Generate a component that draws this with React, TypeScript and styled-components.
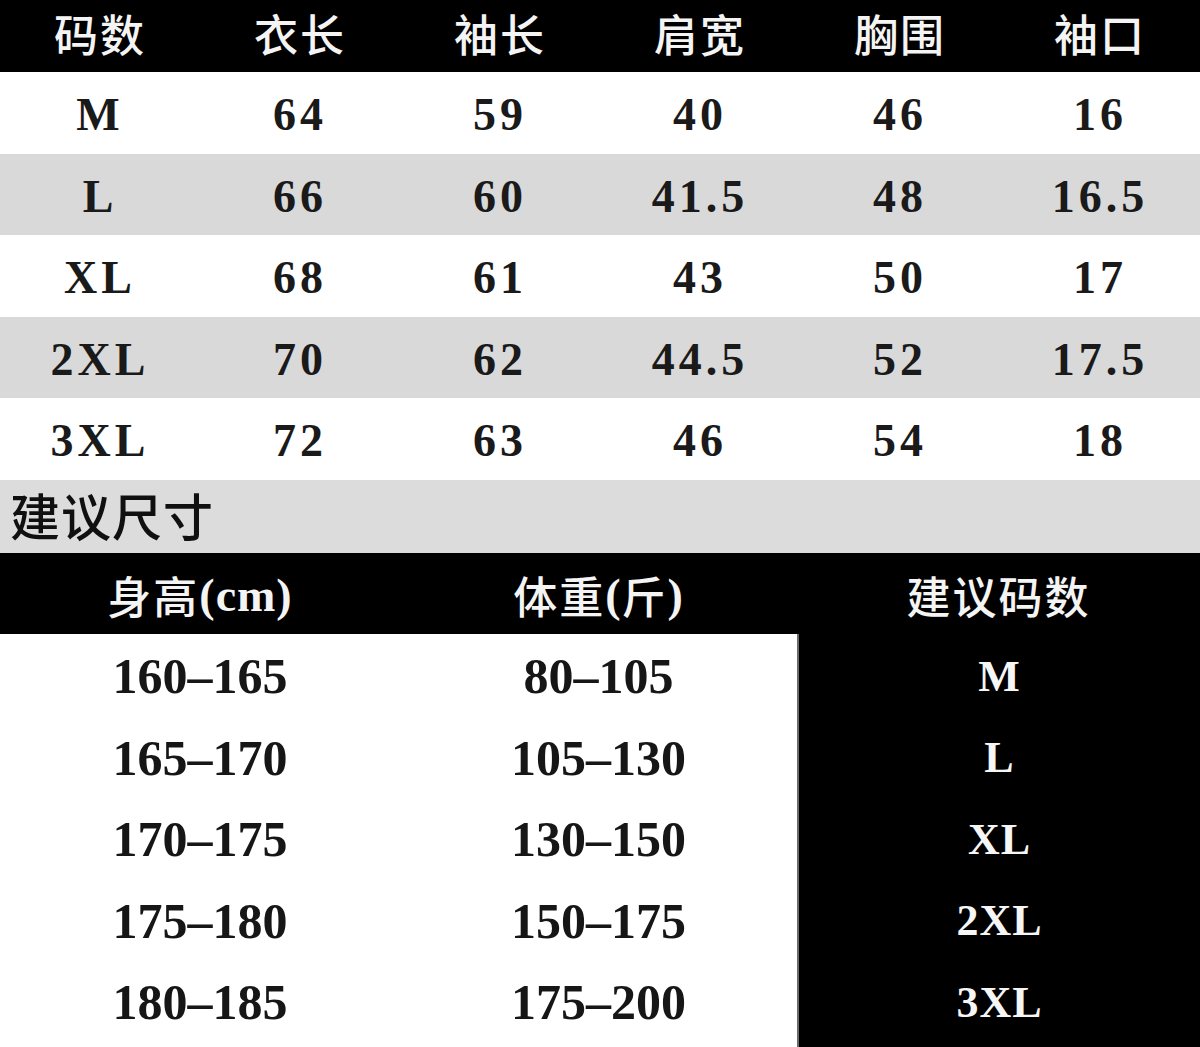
import React from 'react'
import styled, { createGlobalStyle } from 'styled-components'

const GlobalStyle = createGlobalStyle`
  html, body {
    margin: 0;
    padding: 0;
    background: #ffffff;
  }
  * {
    box-sizing: border-box;
  }
`

const Page = styled.div`
  width: 1200px;
  height: 1047px;
  overflow: hidden;
  background: #ffffff;
  display: flex;
  flex-direction: column;
  font-family: "Liberation Serif", "Noto Sans CJK SC", serif;
`

const SizeGrid = styled.div`
  display: grid;
  grid-template-columns: repeat(6, 200px);
`

const HeadCell = styled.div<{ height: number }>`
  height: ${props => props.height}px;
  background: #000000;
  color: #f4f4f4;
  display: flex;
  align-items: center;
  justify-content: center;
  font-family: "Noto Sans CJK SC", sans-serif;
  font-weight: 500;
  font-size: 44px;
  letter-spacing: 2px;
  padding-bottom: 6px;
`

const Cell = styled.div<{ shade: boolean }>`
  height: 81.5px;
  background: ${props => (props.shade ? '#d9d9d9' : '#ffffff')};
  color: #1a1a1a;
  display: flex;
  align-items: center;
  justify-content: center;
  font-family: "Liberation Serif", serif;
  font-weight: 700;
  font-size: 46px;
  letter-spacing: 4px;
  padding-top: 4px;
`

const SectionLabel = styled.div`
  height: 73px;
  background: #dcdcdc;
  color: #101010;
  display: flex;
  align-items: center;
  padding-left: 10px;
  font-family: "Noto Sans CJK SC", sans-serif;
  font-weight: 500;
  font-size: 50px;
  letter-spacing: 1px;
  padding-bottom: 4px;
`

const RecGrid = styled.div`
  display: grid;
  grid-template-columns: 400px 397px 403px;
  flex: 1;
  grid-template-rows: 81px;
  grid-auto-rows: 81.5px;
`

const RecHead = styled.div`
  background: #000000;
  color: #f4f4f4;
  display: flex;
  align-items: center;
  justify-content: center;
  font-family: "Noto Sans CJK SC", sans-serif;
  font-weight: 500;
  font-size: 44px;
  letter-spacing: 2px;
  padding-top: 4px;
`

const Paren = styled.span`
  font-family: "Liberation Serif", serif;
  font-weight: 700;
  font-size: 46px;
  letter-spacing: 1px;
`

const RecCell = styled.div<{ dark: boolean }>`
  background: ${props => (props.dark ? '#000000' : '#ffffff')};
  color: ${props => (props.dark ? '#f6f6f6' : '#161616')};
  border-left: ${props => (props.dark ? '2px solid #6a6a6a' : 'none')};
  display: flex;
  align-items: center;
  justify-content: center;
  font-family: "Liberation Serif", serif;
  font-weight: 700;
  font-size: ${props => (props.dark ? '44px' : '50px')};
  letter-spacing: ${props => (props.dark ? '1px' : '0')};
  padding-top: 4px;
`

const Filler = styled.div<{ dark: boolean }>`
  background: ${props => (props.dark ? '#000000' : '#ffffff')};
  border-left: ${props => (props.dark ? '2px solid #6a6a6a' : 'none')};
`

const headers = ['码数', '衣长', '袖长', '肩宽', '胸围', '袖口']

const sizes: string[][] = [
  ['M', '64', '59', '40', '46', '16'],
  ['L', '66', '60', '41.5', '48', '16.5'],
  ['XL', '68', '61', '43', '50', '17'],
  ['2XL', '70', '62', '44.5', '52', '17.5'],
  ['3XL', '72', '63', '46', '54', '18'],
]

const advice: string[][] = [
  ['160–165', '80–105', 'M'],
  ['165–170', '105–130', 'L'],
  ['170–175', '130–150', 'XL'],
  ['175–180', '150–175', '2XL'],
  ['180–185', '175–200', '3XL'],
]

function App() {
  return (
    <>
      <GlobalStyle />
      <Page>
        <SizeGrid>
          {headers.map(h => (
            <HeadCell key={h} height={72}>{h}</HeadCell>
          ))}
          {sizes.map((row, i) =>
            row.map((v, j) => (
              <Cell key={`${i}-${j}`} shade={i % 2 === 1}>{v}</Cell>
            ))
          )}
        </SizeGrid>
        <SectionLabel>建议尺寸</SectionLabel>
        <RecGrid>
          <RecHead>身高<Paren>(cm)</Paren></RecHead>
          <RecHead>体重<Paren>(</Paren>斤<Paren>)</Paren></RecHead>
          <RecHead>建议码数</RecHead>
          {advice.map((row, i) =>
            row.map((v, j) => (
              <RecCell key={`${i}-${j}`} dark={j === 2}>{v}</RecCell>
            ))
          )}
          <Filler dark={false} />
          <Filler dark={false} />
          <Filler dark={true} />
        </RecGrid>
      </Page>
    </>
  )
}

export default App
